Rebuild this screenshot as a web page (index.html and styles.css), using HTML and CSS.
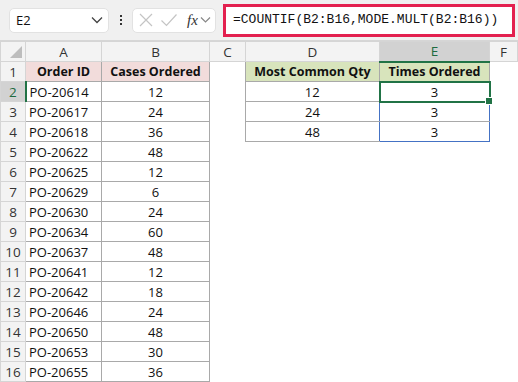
FILE: index.html
```html
<!DOCTYPE html>
<html lang="en">
<head>
	<meta charset="UTF-8">
	<title>COUNTIF MODE.MULT</title>
	<link rel="stylesheet" href="styles.css">
</head>
<body>
	<div class="toolbar">
		<div class="name-box">
			<span>E2</span>
			<svg width="12" height="8" viewBox="0 0 12 8"><path d="M1 1.5 L6 6.5 L11 1.5" fill="none" stroke="#444" stroke-width="1.3"/></svg>
		</div>
		<div class="dots"><i></i><i></i><i></i></div>
		<div class="fx-box">
			<svg width="16" height="16" viewBox="0 0 16 16"><path d="M2 2 L14 14 M14 2 L2 14" stroke="#c4c4c4" stroke-width="1.2"/></svg>
			<svg width="18" height="16" viewBox="0 0 18 16"><path d="M1.5 8.5 L6.5 13.5 L16.5 2.5" fill="none" stroke="#c4c4c4" stroke-width="1.2"/></svg>
			<span class="fx">fx</span>
			<svg width="11" height="8" viewBox="0 0 11 8"><path d="M1 1.5 L5.5 6 L10 1.5" fill="none" stroke="#888" stroke-width="1.2"/></svg>
		</div>
		<div class="formula">=COUNTIF(B2:B16,MODE.MULT(B2:B16))</div>
	</div>

	<table class="sheet">
		<colgroup>
			<col class="c-rh"><col class="c-a"><col class="c-b"><col class="c-c"><col class="c-d"><col class="c-e"><col>
		</colgroup>
		<tr class="col-heads">
			<th class="corner"><span></span></th><th>A</th><th>B</th><th>C</th><th>D</th><th class="sel">E</th><th>F</th>
		</tr>
		<tr>
			<th>1</th><td class="h-pink">Order ID</td><td class="h-pink">Cases Ordered</td><td class="blank"></td>
			<td class="h-green">Most Common Qty</td><td class="h-green">Times Ordered</td><td class="blank"></td>
		</tr>
		<tr>
			<th class="sel">2</th><td>PO-20614</td><td class="num">12</td><td class="blank"></td>
			<td class="num">12</td><td class="num active">3<span class="handle"></span></td><td class="blank"></td>
		</tr>
		<tr>
			<th>3</th><td>PO-20617</td><td class="num">24</td><td class="blank"></td>
			<td class="num spill-l">24</td><td class="num spill">3</td><td class="blank"></td>
		</tr>
		<tr>
			<th>4</th><td>PO-20618</td><td class="num">36</td><td class="blank"></td>
			<td class="num spill-l">48</td><td class="num spill last">3</td><td class="blank"></td>
		</tr>
		<tr><th>5</th><td>PO-20622</td><td class="num">48</td><td class="blank" colspan="4"></td></tr>
		<tr><th>6</th><td>PO-20625</td><td class="num">12</td><td class="blank" colspan="4"></td></tr>
		<tr><th>7</th><td>PO-20629</td><td class="num">6</td><td class="blank" colspan="4"></td></tr>
		<tr><th>8</th><td>PO-20630</td><td class="num">24</td><td class="blank" colspan="4"></td></tr>
		<tr><th>9</th><td>PO-20634</td><td class="num">60</td><td class="blank" colspan="4"></td></tr>
		<tr><th>10</th><td>PO-20637</td><td class="num">48</td><td class="blank" colspan="4"></td></tr>
		<tr><th>11</th><td>PO-20641</td><td class="num">12</td><td class="blank" colspan="4"></td></tr>
		<tr><th>12</th><td>PO-20642</td><td class="num">18</td><td class="blank" colspan="4"></td></tr>
		<tr><th>13</th><td>PO-20646</td><td class="num">24</td><td class="blank" colspan="4"></td></tr>
		<tr><th>14</th><td>PO-20650</td><td class="num">48</td><td class="blank" colspan="4"></td></tr>
		<tr><th>15</th><td>PO-20653</td><td class="num">30</td><td class="blank" colspan="4"></td></tr>
		<tr><th>16</th><td>PO-20655</td><td class="num">36</td><td class="blank" colspan="4"></td></tr>
	</table>
</body>
</html>
```

FILE: styles.css
```css
body {
	margin: 0;
	width: 518px;
	height: 382px;
	overflow: hidden;
	background: white;
	font-family: "Open Sans", "Liberation Sans", sans-serif;
	color: #111;
}

/* formula bar */
.toolbar {
	display: flex;
	align-items: center;
	height: 41px;
	padding: 0 3px 0 9px;
	box-sizing: border-box;
	background: #f0f0f0;
	border-bottom: 1px solid #d6d6d6;
}
.name-box {
	display: flex;
	align-items: center;
	justify-content: space-between;
	width: 100px;
	height: 25px;
	padding: 0 5px 0 6px;
	box-sizing: border-box;
	background: white;
	border: 1px solid #e2e2e2;
	border-radius: 5px;
	font-size: 13px;
}
.dots {
	display: flex;
	flex-direction: column;
	gap: 2px;
	margin: 0 10px 0 11px;
}
.dots i {
	display: block;
	width: 2px; height: 2px;
	background: #333;
}
.fx-box {
	display: flex;
	align-items: center;
	gap: 6px;
	width: 84px;
	height: 25px;
	padding: 0 4px 0 5px;
	box-sizing: border-box;
	background: white;
	border: 1px solid #e2e2e2;
	border-radius: 5px;
}
.fx {
	font: italic 15px "Liberation Serif", serif;
	color: #333;
	margin-left: 3px;
	margin-right: -4px;
}
.formula {
	margin-left: 7px;
	flex: 1;
	height: 33px;
	box-sizing: border-box;
	padding: 5px 0 0 7px;
	background: white;
	border: 3px solid #e3204f;
	font: 13px "Liberation Mono", monospace;
	color: #111;
}

/* grid */
.sheet {
	border-collapse: collapse;
	table-layout: fixed;
	width: 518px;
	font-size: 13px;
}
.c-rh { width: 25px; }
.c-a { width: 76px; }
.c-b { width: 108px; }
.c-c { width: 36px; }
.c-d { width: 134px; }
.c-e { width: 110px; }

.sheet tr { height: 20px; }
.sheet th {
	padding: 0;
	font-weight: normal;
	background: #f3f3f3;
	color: #333;
	border: 1px solid #d5d5d5;
	font-size: 13.5px;
}
.col-heads { height: 19px; }
.sheet th.sel {
	background: #d2d2d2;
	color: #1e6b3f;
}
.col-heads th.sel { border-bottom: 2px solid #217346; }
tr > th.sel:first-child { border-right: 2px solid #217346; }
.corner { position: relative; }
.corner span {
	position: absolute;
	right: 3px; bottom: 3px;
	width: 0; height: 0;
	border-left: 12px solid transparent;
	border-bottom: 12px solid #bdbdbd;
}

.sheet td {
	padding: 0 0 0 3px;
	border: 1px solid #a9a9a9;
	white-space: nowrap;
	overflow: hidden;
}
.sheet td.num { text-align: center; padding: 0; }
.sheet td.blank { border: none; }
.h-pink, .h-green {
	font-weight: bold;
	font-size: 12.5px;
	text-align: center;
	padding: 0 !important;
}
.h-pink { background: #f2dcdb; }
.h-green { background: #d8e4bc; }
.sheet td.active {
	position: relative;
	overflow: visible;
	border: 2px solid #217346;
}
.handle {
	position: absolute;
	right: -4px; bottom: -4px;
	width: 6px; height: 6px;
	background: #217346;
	border: 1px solid white;
}
.sheet td.spill-l { border-right-color: #4472c4; }
.sheet td.spill {
	border-left-color: #4472c4;
	border-right-color: #4472c4;
}
.sheet td.spill.last { border-bottom-color: #4472c4; }
```
